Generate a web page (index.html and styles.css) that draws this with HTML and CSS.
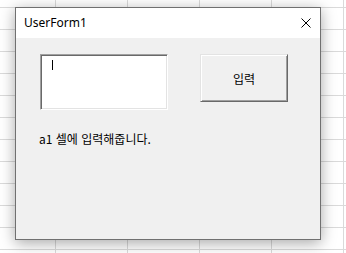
FILE: index.html
```html
<!DOCTYPE html>
<html lang="ko">
<head>
  <meta charset="UTF-8">
  <title>UserForm1</title>
  <link rel="stylesheet" href="styles.css">
</head>
<body>
  <div id="sheet">
    <div id="userform">
      <div id="titlebar">
        <span id="title">UserForm1</span>
        <button id="close-button" aria-label="닫기">
          <svg width="10" height="10" viewBox="0 0 10 10">
            <path d="M0.5 0.5 L9.5 9.5 M9.5 0.5 L0.5 9.5" stroke="#000" stroke-width="1" fill="none"/>
          </svg>
        </button>
      </div>
      <div id="form-body">
        <div id="controls">
          <div id="text-box"><span class="caret"></span></div>
          <button id="input-button">입력</button>
        </div>
        <div id="message">a1 셀에 입력해줍니다.</div>
      </div>
    </div>
  </div>
</body>
</html>
```

FILE: styles.css
```css
html, body {
  margin: 0;
  padding: 0;
}

body {
  width: 346px;
  height: 253px;
  overflow: hidden;
  font-family: "Noto Sans CJK KR", "Noto Sans", sans-serif;
}

#sheet {
  height: 100%;
  padding: 7px 0 0 15px;
  box-sizing: border-box;
  background-color: #fff;
  background-image:
    linear-gradient(to right, #dadada 1px, transparent 1px),
    linear-gradient(to bottom, #dadada 1px, transparent 1px);
  background-size: 72px 100%, 100% 22px;
  background-position: 55px 0, 0 7px;
}

#userform {
  width: 306px;
  height: 233px;
  box-sizing: border-box;
  border: 1px solid #707070;
  background-color: #f0f0f0;
  box-shadow: 0 3px 14px rgba(0, 0, 0, 0.35);
  display: flex;
  flex-direction: column;
}

#titlebar {
  height: 30px;
  background-color: #fff;
  display: flex;
  align-items: center;
  justify-content: space-between;
  padding: 0 9px 0 8px;
}

#title {
  font-family: "Noto Sans", sans-serif;
  font-size: 12px;
  color: #000;
  margin-top: -1px;
}

#close-button {
  border: none;
  background: transparent;
  padding: 0;
  width: 10px;
  height: 10px;
  display: flex;
}

#form-body {
  flex: 1;
  padding: 16px 0 0 24px;
}

#controls {
  display: flex;
  align-items: flex-start;
  gap: 32px;
}

#text-box {
  width: 128px;
  height: 56px;
  box-sizing: border-box;
  background-color: #fff;
  border: 1px solid;
  border-color: #a0a0a0 #fff #fff #a0a0a0;
  box-shadow: inset 1px 1px 0 #696969, inset -1px -1px 0 #e3e3e3;
  padding: 5px 0 0 11px;
}

.caret {
  display: block;
  width: 1px;
  height: 10px;
  background-color: #000;
}

#input-button {
  width: 88px;
  height: 48px;
  box-sizing: border-box;
  background-color: #f0f0f0;
  border: 1px solid;
  border-color: #e3e3e3 #696969 #696969 #e3e3e3;
  box-shadow: inset 1px 1px 0 #fff, inset -1px -1px 0 #a0a0a0;
  font-family: "Noto Sans CJK KR", sans-serif;
  font-size: 12px;
  color: #000;
  padding: 0;
}

#message {
  margin-top: 21px;
  font-size: 12px;
  line-height: 16px;
  color: #000;
  margin-left: -1px;
}
```
